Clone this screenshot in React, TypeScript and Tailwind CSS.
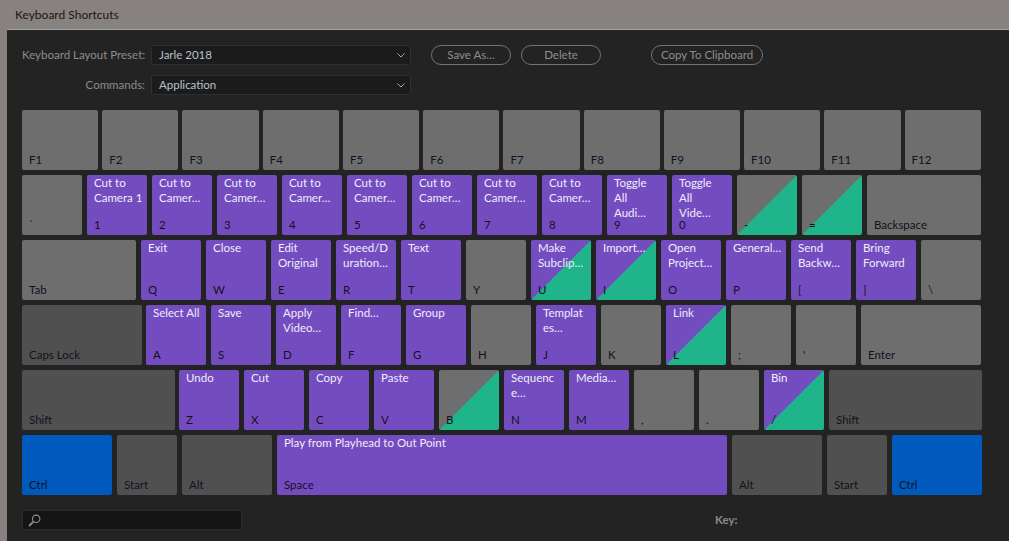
const PURPLE = "bg-[#734dc0]";
const GRAY = "bg-[#6e6e6e]";
const DARK = "bg-[#505050]";
const BLUE = "bg-[#0059bd]";
const GRAY_SPLIT = "bg-[linear-gradient(to_bottom_right,#6e6e6e_49.5%,#1fb48a_50.5%)]";
const PURPLE_SPLIT = "bg-[linear-gradient(to_bottom_right,#734dc0_49.5%,#1fb48a_50.5%)]";

type KeyDef = { name: string; lines?: string[]; bg?: string; w?: string };

const cam = ["Cut to", "Camer…"];

const rows: KeyDef[][] = [
  [
    { name: "`" },
    { name: "1", lines: ["Cut to", "Camera 1"], bg: PURPLE },
    { name: "2", lines: cam, bg: PURPLE },
    { name: "3", lines: cam, bg: PURPLE },
    { name: "4", lines: cam, bg: PURPLE },
    { name: "5", lines: cam, bg: PURPLE },
    { name: "6", lines: cam, bg: PURPLE },
    { name: "7", lines: cam, bg: PURPLE },
    { name: "8", lines: cam, bg: PURPLE },
    { name: "9", lines: ["Toggle", "All", "Audi…"], bg: PURPLE },
    { name: "0", lines: ["Toggle", "All", "Vide…"], bg: PURPLE },
    { name: "-", bg: GRAY_SPLIT },
    { name: "=", bg: GRAY_SPLIT },
    { name: "Backspace", w: "w-[114px]" },
  ],
  [
    { name: "Tab", w: "w-[114px]" },
    { name: "Q", lines: ["Exit"], bg: PURPLE },
    { name: "W", lines: ["Close"], bg: PURPLE },
    { name: "E", lines: ["Edit", "Original"], bg: PURPLE },
    { name: "R", lines: ["Speed/D", "uration…"], bg: PURPLE },
    { name: "T", lines: ["Text"], bg: PURPLE },
    { name: "Y" },
    { name: "U", lines: ["Make", "Subclip…"], bg: PURPLE_SPLIT },
    { name: "I", lines: ["Import…"], bg: PURPLE_SPLIT },
    { name: "O", lines: ["Open", "Project…"], bg: PURPLE },
    { name: "P", lines: ["General…"], bg: PURPLE },
    { name: "[", lines: ["Send", "Backw…"], bg: PURPLE },
    { name: "]", lines: ["Bring", "Forward"], bg: PURPLE },
    { name: "\\" },
  ],
  [
    { name: "Caps Lock", bg: DARK, w: "w-[120px] -mr-px" },
    { name: "A", lines: ["Select All"], bg: PURPLE },
    { name: "S", lines: ["Save"], bg: PURPLE },
    { name: "D", lines: ["Apply", "Video…"], bg: PURPLE },
    { name: "F", lines: ["Find…"], bg: PURPLE },
    { name: "G", lines: ["Group"], bg: PURPLE },
    { name: "H" },
    { name: "J", lines: ["Templat", "es…"], bg: PURPLE },
    { name: "K" },
    { name: "L", lines: ["Link"], bg: PURPLE_SPLIT },
    { name: ";" },
    { name: "'" },
    { name: "Enter", w: "w-[120px]" },
  ],
  [
    { name: "Shift", bg: DARK, w: "w-[153px] -mr-px" },
    { name: "Z", lines: ["Undo"], bg: PURPLE },
    { name: "X", lines: ["Cut"], bg: PURPLE },
    { name: "C", lines: ["Copy"], bg: PURPLE },
    { name: "V", lines: ["Paste"], bg: PURPLE },
    { name: "B", bg: GRAY_SPLIT },
    { name: "N", lines: ["Sequenc", "e…"], bg: PURPLE },
    { name: "M", lines: ["Media…"], bg: PURPLE },
    { name: "," },
    { name: "." },
    { name: "/", lines: ["Bin"], bg: PURPLE_SPLIT },
    { name: "Shift", bg: DARK, w: "w-[153px]" },
  ],
  [
    { name: "Ctrl", bg: BLUE, w: "w-[90px]" },
    { name: "Start", bg: DARK },
    { name: "Alt", bg: DARK, w: "w-[90px]" },
    { name: "Space", lines: ["Play from Playhead to Out Point"], bg: PURPLE, w: "w-[450px]" },
    { name: "Alt", bg: DARK, w: "w-[90px]" },
    { name: "Start", bg: DARK },
    { name: "Ctrl", bg: BLUE, w: "w-[90px]" },
  ],
];

const fKeys = ["F1", "F2", "F3", "F4", "F5", "F6", "F7", "F8", "F9", "F10", "F11", "F12"];

function Key({ name, lines, bg = GRAY, w = "w-[60px]" }: KeyDef) {
  return (
    <div className={`${w} ${bg} h-[60px] shrink-0 rounded-[2px] px-[7px] flex flex-col`}>
      <div className="flex-1 min-h-0 text-[#f0ecfa] leading-[15px] whitespace-nowrap">
        {lines?.map((line, i) => (
          <div key={i}>{line}</div>
        ))}
      </div>
      <div className="text-[#15101f] leading-[15px] mb-[3px] whitespace-nowrap">{name}</div>
    </div>
  );
}

function Select({ value }: { value: string }) {
  return (
    <div className="w-[260px] h-[20px] bg-[#1b1b1b] border border-[#2f2f2f] rounded-[2px] flex items-center justify-between pl-[7px] pr-[5px] text-[#b9c0cc]">
      <span>{value}</span>
      <svg width="8" height="5" viewBox="0 0 8 5" fill="none" stroke="#a8a8a8" strokeWidth="1">
        <path d="M0.5 0.5 L4 4 L7.5 0.5" />
      </svg>
    </div>
  );
}

function Pill({ label, w }: { label: string; w: string }) {
  return (
    <div className={`${w} h-[20px] border border-[#737373] rounded-full flex items-center justify-center text-[#8e8e8e]`}>
      {label}
    </div>
  );
}

export default function App() {
  return (
    <div className="w-[1009px] h-[541px] overflow-hidden bg-[#87827f] font-['Lato',sans-serif] text-[11.5px]">
      <div className="h-[29px] pl-[15px] pt-[7px] leading-[16px] text-[12px] text-[#1c1416]">Keyboard Shortcuts</div>
      <div className="ml-[7px] h-[512px] bg-[#232323] border-t border-[#a3a5ad] pl-[15px] pt-[15px]">
        <div className="flex items-center h-[20px]">
          <div className="w-[123px] text-right text-[#8c8c8c] whitespace-nowrap">Keyboard Layout Preset:</div>
          <div className="ml-[6px]">
            <Select value="Jarle 2018" />
          </div>
          <div className="ml-[20px] flex">
            <Pill label="Save As…" w="w-[80px]" />
            <div className="ml-[10px]">
              <Pill label="Delete" w="w-[80px]" />
            </div>
            <div className="ml-[50px]">
              <Pill label="Copy To Clipboard" w="w-[112px]" />
            </div>
          </div>
        </div>
        <div className="flex items-center h-[20px] mt-[10px]">
          <div className="w-[123px] text-right text-[#8c8c8c]">Commands:</div>
          <div className="ml-[6px]">
            <Select value="Application" />
          </div>
        </div>

        <div className="mt-[15px] w-[958.8px] grid grid-cols-12 gap-[4px]">
          {fKeys.map((k) => (
            <Key key={k} name={k} w="w-full" />
          ))}
        </div>
        <div className="flex flex-col gap-[5px] mt-[5px]">
          {rows.map((row, r) => (
            <div key={r} className="flex gap-[5px]">
              {row.map((k, i) => (
                <Key key={i} {...k} />
              ))}
            </div>
          ))}
        </div>

        <div className="flex items-center mt-[15px]">
          <div className="w-[220px] h-[20px] bg-[#141414] border border-[#2c2c2c] rounded-[2px] flex items-center pl-[5px]">
            <svg width="13" height="13" viewBox="0 0 13 13" fill="none" stroke="#8f8f8f" strokeWidth="1.1">
              <circle cx="8.2" cy="4.8" r="3.7" />
              <path d="M5.4 7.6 L1 12" strokeWidth="1.8" />
            </svg>
          </div>
          <div className="ml-[473px] font-bold text-[#8a8a8a]">Key:</div>
        </div>
      </div>
    </div>
  );
}
